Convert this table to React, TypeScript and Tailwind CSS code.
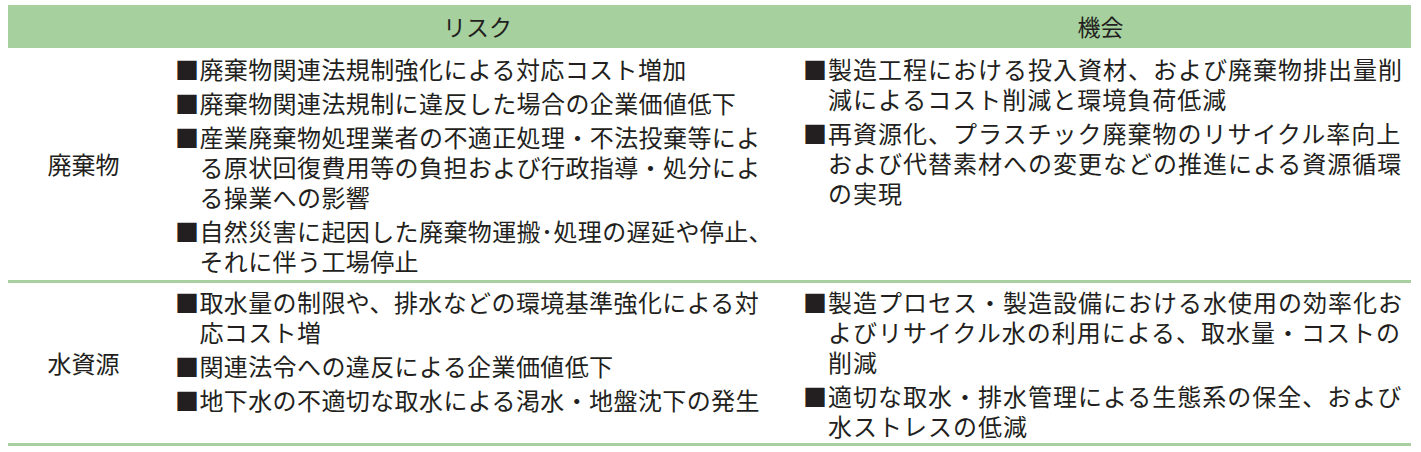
import React from "react";

type Item = string[];

const riskWaste: Item[] = [
  ["■廃棄物関連法規制強化による対応コスト増加"],
  ["■廃棄物関連法規制に違反した場合の企業価値低下"],
  [
    "■産業廃棄物処理業者の不適正処理・不法投棄等によ",
    "る原状回復費用等の負担および行政指導・処分によ",
    "る操業への影響",
  ],
  ["■自然災害に起因した廃棄物運搬･処理の遅延や停止、", "それに伴う工場停止"],
];

const oppWaste: Item[] = [
  ["■製造工程における投入資材、および廃棄物排出量削", "減によるコスト削減と環境負荷低減"],
  [
    "■再資源化、プラスチック廃棄物のリサイクル率向上",
    "および代替素材への変更などの推進による資源循環",
    "の実現",
  ],
];

const riskWater: Item[] = [
  ["■取水量の制限や、排水などの環境基準強化による対", "応コスト増"],
  ["■関連法令への違反による企業価値低下"],
  ["■地下水の不適切な取水による渇水・地盤沈下の発生"],
];

const oppWater: Item[] = [
  [
    "■製造プロセス・製造設備における水使用の効率化お",
    "よびリサイクル水の利用による、取水量・コストの",
    "削減",
  ],
  ["■適切な取水・排水管理による生態系の保全、および", "水ストレスの低減"],
];

function RiskList({ items }: { items: Item[] }) {
  return (
    <div className="flex flex-col gap-[4px] pl-[10px] tracking-[0.4px]">
      {items.map((lines, i) => (
        <div key={i} className="flex flex-col">
          {lines.map((l, j) => (
            <div
              key={j}
              className={`h-[30px] leading-[30px] whitespace-nowrap ${j > 0 ? "pl-[24.4px]" : ""}`}
            >
              {l}
            </div>
          ))}
        </div>
      ))}
    </div>
  );
}

function OppList({ items }: { items: Item[] }) {
  return (
    <div className="flex flex-col gap-[4px] pl-[13px] tracking-[1px]">
      {items.map((lines, i) => (
        <div key={i} className="flex flex-col">
          {lines.map((l, j) => (
            <div
              key={j}
              className={`h-[30px] leading-[30px] whitespace-nowrap ${j > 0 ? "pl-[25px]" : ""}`}
            >
              {l}
            </div>
          ))}
        </div>
      ))}
    </div>
  );
}

export default function App() {
  return (
    <div
      className="w-[1421px] h-[452px] bg-white pt-[5px] pl-[8px] pr-[10px] text-[24px] text-[#231f20] overflow-hidden"
      style={{ fontFamily: '"Noto Sans CJK JP", "Noto Sans", sans-serif' }}
    >
      <div className="grid grid-cols-[157px_625px_621px]">
        {/* header */}
        <div className="h-[43px] bg-[#a6d19e]" />
        <div className="h-[43px] bg-[#a6d19e] flex items-center justify-center text-[23px]">リスク</div>
        <div className="h-[43px] bg-[#a6d19e] flex items-center justify-center text-[23px]">機会</div>

        {/* row 1 */}
        <div className="flex items-center justify-center pr-[6px]">廃棄物</div>
        <div className="pt-[6px] pb-[4px]">
          <RiskList items={riskWaste} />
        </div>
        <div className="pt-[6px] pb-[4px]">
          <OppList items={oppWaste} />
        </div>

        <div className="col-span-3 h-[3px] bg-[#a8cfa0]" />

        {/* row 2 */}
        <div className="flex items-center justify-center pr-[6px]">水資源</div>
        <div className="pt-[4px] pb-[2px]">
          <RiskList items={riskWater} />
        </div>
        <div className="pt-[4px] pb-[2px]">
          <OppList items={oppWater} />
        </div>

        <div className="col-span-3 h-[3px] bg-[#a8cfa0]" />
      </div>
    </div>
  );
}
